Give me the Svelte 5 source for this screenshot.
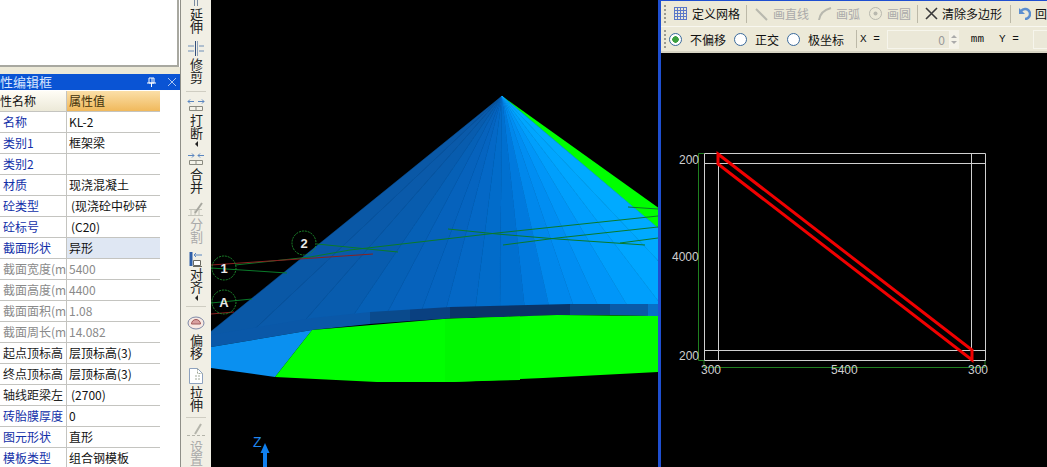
<script>
	const rows = [
		{ name: '名称', value: 'KL-2', kind: 'blue' },
		{ name: '类别1', value: '框架梁', kind: 'blue' },
		{ name: '类别2', value: '', kind: 'blue' },
		{ name: '材质', value: '现浇混凝土', kind: 'blue' },
		{ name: '砼类型', value: '(现浇砼中砂碎', kind: 'blue', pad: true },
		{ name: '砼标号', value: '(C20)', kind: 'blue', pad: true },
		{ name: '截面形状', value: '异形', kind: 'blue', active: true },
		{ name: '截面宽度(m', value: '5400', kind: 'grey' },
		{ name: '截面高度(m', value: '4400', kind: 'grey' },
		{ name: '截面面积(m', value: '1.08', kind: 'grey' },
		{ name: '截面周长(m', value: '14.082', kind: 'grey' },
		{ name: '起点顶标高', value: '层顶标高(3)', kind: 'black' },
		{ name: '终点顶标高', value: '层顶标高(3)', kind: 'black' },
		{ name: '轴线距梁左', value: '(2700)', kind: 'black', pad: true },
		{ name: '砖胎膜厚度', value: '0', kind: 'blue' },
		{ name: '图元形状', value: '直形', kind: 'blue' },
		{ name: '模板类型', value: '组合钢模板', kind: 'blue' }
	];

	// cone fan: x where each ray meets the rim, colour of the wedge after it
	const fan = [
		[205, '#0a58a6'], [250, '#0a5aaa'], [300, '#085cae'], [350, '#0660b6'], [385, '#0662bc'],
		[420, '#0564c0'], [445, '#0468c6'], [475, '#026cca'], [500, '#0070d0'], [525, '#007ade'],
		[550, '#0088ec'], [575, '#008ef2'], [600, '#0096f8'], [630, '#009ffc'], [665, '#00a6ff'],
		[705, '#00aaff'], [748, '#00aaff']
	];
	const rim = (x) => 304 + Math.pow(Math.max(658 - x, 0) / 447, 3) * 31;
	// rim points dip a little under the band so no gap shows between chord and curve
	const rimPoint = (x, i) => `${x},${rim(x) + (i === 0 || i === fan.length - 1 ? 0 : 6)}`;
	const wedges = fan.slice(0, -1).map(([x, c], i) => ({
		c,
		pts: `502,96 ${rimPoint(x, i)} ${rimPoint(fan[i + 1][0], i + 1)}`
	}));
</script>

<div class="screen">
	<aside class="side">
		<div class="topbox"></div>
		<div class="titlebar">
			<span class="title">属性编辑框</span>
			<svg class="pin" viewBox="0 0 9 10" width="9" height="10"><path d="M2 1h5v5H2zM5 1v5M0 6h9M4.500 6v4" fill="none" stroke="#fff" /></svg>
			<svg class="close" viewBox="0 0 8 8" width="8" height="8"><path d="M0 0l8 8M8 0L0 8" stroke="#a9c4f2" /></svg>
		</div>
		<div class="grid">
			<div class="row head">
				<div class="name"><span class="cut">属性名称</span></div>
				<div class="val">属性值</div>
			</div>
			{#each rows as r}
				<div class="row" class:active={r.active}>
					<div class="name {r.kind}">{r.name}</div>
					<div class="val {r.kind === 'grey' ? 'grey' : ''}" class:pad={r.pad}>{r.value}</div>
				</div>
			{/each}
		</div>
	</aside>

	<nav class="tools">
		<div class="tool">
			<svg viewBox="0 0 20 7" width="20" height="7"><path d="M8.500 0v6M11.500 0v6" stroke="#7a8aa0" /></svg>
			<span>延伸</span>
		</div>
		<div class="tool">
			<svg viewBox="0 0 20 16" width="20" height="16"><path d="M2 5h6M2 10h6M13 5h5M13 10h5" stroke="#6f8fb8" /><path d="M9.500 0v15" stroke="#34507c" /><path d="M11.500 0v15" stroke="#8fa2ba" /></svg>
			<span>修剪</span>
		</div>
		<hr class="first" />
		<div class="tool">
			<svg viewBox="0 0 20 15" width="20" height="15"><path d="M2 3.500h6M12 3.500h6M2 3.500l2-2M2 3.500l2 2M18 3.500l-2-2M18 3.500l-2 2" stroke="#5a86c0" fill="none" /><path d="M3.500 8.500h13v4h-13zM10 8.500v4" stroke="#8a8a80" fill="#f4f2e8" /></svg>
			<span>打断</span>
			<i class="caret"></i>
		</div>
		<div class="tool">
			<svg viewBox="0 0 20 15" width="20" height="15"><path d="M2 3.500h6M12 3.500h6M8 3.500l-2-2M8 3.500l-2 2M12 3.500l2-2M12 3.500l2 2" stroke="#5a86c0" fill="none" /><path d="M3.500 8.500h13v4h-13zM10 8.500v4" stroke="#8a8a80" fill="#f4f2e8" /></svg>
			<span>合并</span>
		</div>
		<div class="tool off">
			<svg viewBox="0 0 20 16" width="20" height="16"><path d="M2 14.500h15M3 8.500h13M5 8v6M9 8v6M13 8v6" stroke="#c4c4ba" fill="none" /><path d="M16 2l-7 10" stroke="#a8a8a0" stroke-width="2" /></svg>
			<span>分割</span>
		</div>
		<div class="tool">
			<svg viewBox="0 0 20 16" width="20" height="16"><path d="M5 1v14" stroke="#2f5fa8" stroke-width="3" /><path d="M7.500 9.500h7v5h-7zM7 15.500h9" stroke="#6a6a62" fill="#fff" /><path d="M8 4h8M8 4l2-2M8 4l2 2" stroke="#5a86c0" fill="none" /></svg>
			<span>对齐</span>
			<i class="caret"></i>
		</div>
		<hr />
		<div class="tool">
			<svg class="tall" viewBox="0 0 20 16" width="20" height="16"><ellipse cx="10" cy="9" rx="8" ry="6" fill="#f8e8e2" stroke="#7e8aa8" /><path d="M5.500 10a4.500 4.500 0 0 1 9 0z" fill="#d8a0a0" stroke="#a05a5a" /></svg>
			<span>偏移</span>
		</div>
		<div class="tool">
			<svg viewBox="0 0 20 18" width="20" height="18"><path d="M3.500 1.500h8l5 5v10h-13z" fill="#fff" stroke="#8ea2bf" /><path d="M11.500 1.500v5h5M9 9h5M9 12h5" stroke="#a0a898" fill="none" stroke-dasharray="2 1" /></svg>
			<span>拉伸</span>
		</div>
		<hr class="tight" />
		<div class="tool off">
			<svg viewBox="0 0 20 16" width="20" height="16"><path d="M15 1L9 11" stroke="#b5b5ab" stroke-width="2" /><path d="M1 12.500h18" stroke="#b4b4aa" stroke-dasharray="3 2" /></svg>
			<span>设置</span>
		</div>
	</nav>

	<main class="view3d">
		<svg viewBox="211 0 447 467" width="447" height="467">
			<path d="M502 96L660 209V230z" fill="#00ff00" />
			{#each wedges as w}
				<polygon points={w.pts} fill={w.c} stroke={w.c} stroke-width="0.500" />
			{/each}
			<path d="M211 335L312 318L370 312L370 324L312 330L211 347z" fill="#0a58a8" />
			<path d="M370 312L410 309.500V321L370 324z" fill="#0a4a8c" />
			<path d="M410 309.500L450 307V318.500L410 321z" fill="#0a4080" />
			<path d="M450 307L570 304V315L450 318.500z" fill="#0a3468" />
			<path d="M570 304L610 304V315H570z" fill="#0b4a88" />
			<path d="M610 304H648V316L610 315z" fill="#0a5aa8" />
			<path d="M648 304H658V316L648 316z" fill="#0870c8" />
			<path d="M211 347L312 330L275 377L211 368z" fill="#0a90f0" />
			<path d="M312 330L443 319L557 315L658 316V372L543 378L453 382H377L275 377z" fill="#00ff00" />
			<path d="M445 319L520 316.500V380L445 382z" fill="#00f800" />
			<g fill="none" stroke="#0a7a2a">
				<path d="M235 265L310 257L350 250L497 233L658 216" />
				<path d="M448 229L497 234L557 239L645 245" />
				<path d="M503 245L557 238L658 227" />
				<path d="M628 207L658 209" />
				<path d="M620 243L658 238" />
				<path d="M317 244L398 252" />
				<path d="M211 268L287 273" />
				<path d="M211 303L252 299" />
			</g>
			<path d="M211 265L373 254M211 314L234 312" stroke="#8a2020" fill="none" />
			<g fill="none" stroke="#1c8a2c" stroke-dasharray="2 1">
				<circle cx="304" cy="243" r="12" />
				<circle cx="224" cy="268" r="12" />
				<circle cx="224" cy="302" r="12" />
			</g>
			<g fill="#e8e8e8" font-family="Liberation Sans, sans-serif" font-size="13" font-weight="bold" text-anchor="middle">
				<text x="304" y="248">2</text>
				<text x="224" y="273">1</text>
				<text x="224" y="307">A</text>
			</g>
			<path d="M265 467V452" stroke="#1080f0" stroke-width="4" />
			<path d="M265 443L269.500 453H260.500z" fill="#1080f0" />
			<text x="253" y="447" fill="#2088f0" font-family="Liberation Sans, sans-serif" font-size="14">Z</text>
		</svg>
	</main>

	<section class="right">
		<div class="bar">
			<i class="grip"></i>
			<svg viewBox="0 0 15 15" width="15" height="15"><path d="M1 1.500h13M1 4.500h13M1 7.500h13M1 10.500h13M1 13.500h13M1.500 1v13M4.500 1v13M7.500 1v13M10.500 1v13M13.500 1v13" stroke="#5a78c8" fill="none" /></svg>
			<span class="lbl">定义网格</span>
			<i class="sep"></i>
			<svg viewBox="0 0 15 15" width="15" height="15"><path d="M2 3L13 14" stroke="#b8b8ae" stroke-width="2" /></svg>
			<span class="lbl off">画直线</span>
			<svg viewBox="0 0 15 15" width="15" height="15"><path d="M2 14Q3 5 14 2" stroke="#b8b8ae" stroke-width="2" fill="none" /></svg>
			<span class="lbl off">画弧</span>
			<svg viewBox="0 0 15 15" width="15" height="15"><circle cx="7.500" cy="7.500" r="6" fill="none" stroke="#b8b8ae" /><circle cx="7.500" cy="7.500" r="2" fill="#b8b8ae" /></svg>
			<span class="lbl off">画圆</span>
			<i class="sep"></i>
			<svg viewBox="0 0 13 13" width="13" height="13"><path d="M1 1l11 11M12 1L1 12" stroke="#3a3a3a" stroke-width="1.600" /></svg>
			<span class="lbl">清除多边形</span>
			<i class="sep end"></i>
			<svg viewBox="0 0 13 13" width="13" height="13"><path d="M3 4a5 5 0 1 1 4 8" stroke="#5b8ed0" stroke-width="2.500" fill="none" /><path d="M1 1v6h6z" fill="#5b8ed0" /></svg>
			<span class="lbl">回</span>
		</div>
		<div class="bar second">
			<i class="grip"></i>
			<label class="radio on"><i></i>不偏移</label>
			<label class="radio"><i></i>正交</label>
			<label class="radio"><i></i>极坐标</label>
			<i class="sep wide"></i>
			<span class="mono">X =</span>
			<span class="num">0</span>
			<span class="spin"><i></i><i class="down"></i></span>
			<span class="mono unit">mm</span>
			<span class="mono">Y =</span>
			<span class="num last"></span>
		</div>
		<div class="canvas">
			<svg viewBox="661 53 386 414" width="386" height="414">
				<g fill="none" stroke="#1f7f1f">
					<path d="M704 153.500H698.500V360.500H704M704 361V367.500H985V361" />
				</g>
				<g fill="none" stroke="#d0d0d0">
					<path d="M704.500 153.500H985.500V360.500H704.500zM704 163.500H985M704 350.500H985M718.500 153V361M971.500 153V361" />
				</g>
				<path d="M718 154L972 350V360L718 164z" fill="none" stroke="#f00000" stroke-width="3" />
				<g fill="#cfcfcf" font-family="Liberation Sans, sans-serif" font-size="12">
					<text x="679" y="164">200</text>
					<text x="672" y="261">4000</text>
					<text x="679" y="360">200</text>
					<text x="701" y="374">300</text>
					<text x="831" y="374">5400</text>
					<text x="968" y="374">300</text>
				</g>
			</svg>
		</div>
	</section>
</div>

<style>
	:global(body) {
		margin: 0;
		background: #000;
	}
	.screen {
		display: flex;
		width: 1047px;
		height: 467px;
		overflow: hidden;
		font-family: 'Noto Sans CJK SC', 'Liberation Sans', sans-serif;
		font-size: 12px;
		color: #111;
	}
	.side {
		width: 180px;
		flex: none;
		background: #fff;
		overflow: hidden;
		border-right: 1px solid #8f8f88;
	}
	.topbox {
		height: 65px;
		margin-right: 1px;
		background: #fff;
		border-bottom: 2px solid #a8a8a0;
		border-right: 2px solid #a8a8a0;
	}
	.titlebar {
		display: flex;
		align-items: center;
		height: 16px;
		margin-top: 7px;
		background: #0a54d4;
		color: #d8e6ff;
		box-shadow: 0 -7px 0 #ece9d8;
	}
	.title {
		flex: 1;
		margin-left: -13px;
		font-size: 13px;
		line-height: 16px;
	}
	.pin {
		margin-right: 12px;
	}
	.close {
		margin-right: 4px;
	}
	.grid {
		width: 160px;
		border-top: 1px solid #fff;
	}
	.row {
		display: flex;
		height: 20px;
		line-height: 20px;
		border-bottom: 1px solid #c4c4c0;
		background: #fff;
	}
	.row.active .val {
		background: #dfe7f3;
	}
	.head .name {
		background: linear-gradient(#fffdf6, #ece9d8);
	}
	.head .val {
		background: linear-gradient(#fbdfa8, #f0b95c);
		color: #40300a;
	}
	.cut {
		margin-left: -15px;
	}
	.name {
		width: 63px;
		padding-left: 3px;
		flex: none;
		overflow: hidden;
		white-space: nowrap;
		border-right: 1px solid #c4c4c0;
	}
	.blue {
		color: #1230a8;
	}
	.grey {
		color: #8a8a8a;
	}
	.black {
		color: #222;
	}
	.val {
		flex: 1;
		padding-left: 2px;
		white-space: nowrap;
		overflow: hidden;
	}
	.val.pad {
		padding-left: 4px;
	}
	.tools {
		width: 30px;
		flex: none;
		background: #f1efe5;
		display: flex;
		flex-direction: column;
		align-items: center;
		gap: 7px;
		overflow: hidden;
	}
	.tool {
		display: flex;
		flex-direction: column;
		align-items: center;
		flex: none;
		font-size: 13px;
		color: #222;
	}
	.tool.off {
		color: #aaa;
	}
	.tool span {
		margin-top: 1px;
		writing-mode: vertical-rl;
		text-orientation: upright;
		line-height: 20px;
	}
	.tool .tall {
		margin-bottom: 3px;
	}
	.tools hr {
		width: 20px;
		margin: 0;
		border: 0;
		border-top: 1px solid #cfcdc2;
		flex: none;
	}
	.tools hr.first {
		margin-bottom: -1px;
	}
	.tools hr.tight {
		margin: -2px 0;
	}
	.caret {
		width: 0;
		height: 0;
		margin: 1px 0 -2px;
		border: 3px solid transparent;
		border-right-color: #222;
		border-left-width: 0;
	}
	.view3d {
		width: 447px;
		flex: none;
		background: #000;
		border-right: 3px solid #1f4fd0;
	}
	.view3d svg,
	.canvas svg {
		display: block;
	}
	.right {
		flex: 1;
		min-width: 0;
		overflow: hidden;
		background: #000;
		border-top: 1px solid #1f4fd0;
	}
	.bar {
		display: flex;
		align-items: center;
		gap: 4px;
		height: 25px;
		padding-left: 3px;
		background: #ece9d8;
		border-bottom: 1px solid #f8f7f0;
		white-space: nowrap;
	}
	.bar > * {
		flex: none;
	}
	.bar.second {
		height: 24px;
		border-bottom: 2px solid #d8d5c4;
	}
	.second .grip {
		margin-right: -1px;
	}
	.grip {
		width: 2px;
		height: 18px;
		margin-right: 3px;
		background: repeating-linear-gradient(#9a9a90 0 2px, transparent 2px 4px);
	}
	.sep {
		width: 1px;
		height: 18px;
		margin: 0 3px 0 -2px;
		background: #bcb9a8;
	}
	.sep.end {
		margin-left: 0;
	}
	.sep.wide {
		margin-left: 4px;
		margin-right: -1px;
	}
	.lbl {
		margin-right: 4px;
	}
	.lbl.off {
		color: #aaa;
	}
	.radio {
		display: flex;
		align-items: center;
		gap: 8px;
		margin-right: 4px;
	}
	.radio i {
		box-sizing: border-box;
		width: 13px;
		height: 13px;
		border: 1px solid #3a6a9c;
		border-radius: 50%;
		background: #fff;
	}
	.radio.on i {
		background: radial-gradient(#3ca040 0 3px, #fff 3.500px);
	}
	.mono {
		font-family: 'Liberation Mono', monospace;
		font-size: 11px;
	}
	.unit {
		margin: 0 11px 0 8px;
	}
	.num {
		box-sizing: border-box;
		width: 63px;
		height: 19px;
		margin-left: 3px;
		padding-right: 4px;
		text-align: right;
		color: #999;
		line-height: 18px;
		background: #ebe8d8;
		border: 1px solid #f6f5ec;
	}
	.num.last {
		margin-left: 10px;
	}
	.spin {
		display: flex;
		flex-direction: column;
		justify-content: center;
		align-items: center;
		gap: 3px;
		width: 9px;
		height: 19px;
		margin-left: -4px;
		background: #f4f2e8;
	}
	.spin i {
		border: 3px solid transparent;
		border-top: 0;
		border-bottom: 3px solid #aaa;
	}
	.spin i.down {
		border-bottom: 0;
		border-top: 3px solid #aaa;
	}
	.canvas {
		height: 414px;
	}
</style>
